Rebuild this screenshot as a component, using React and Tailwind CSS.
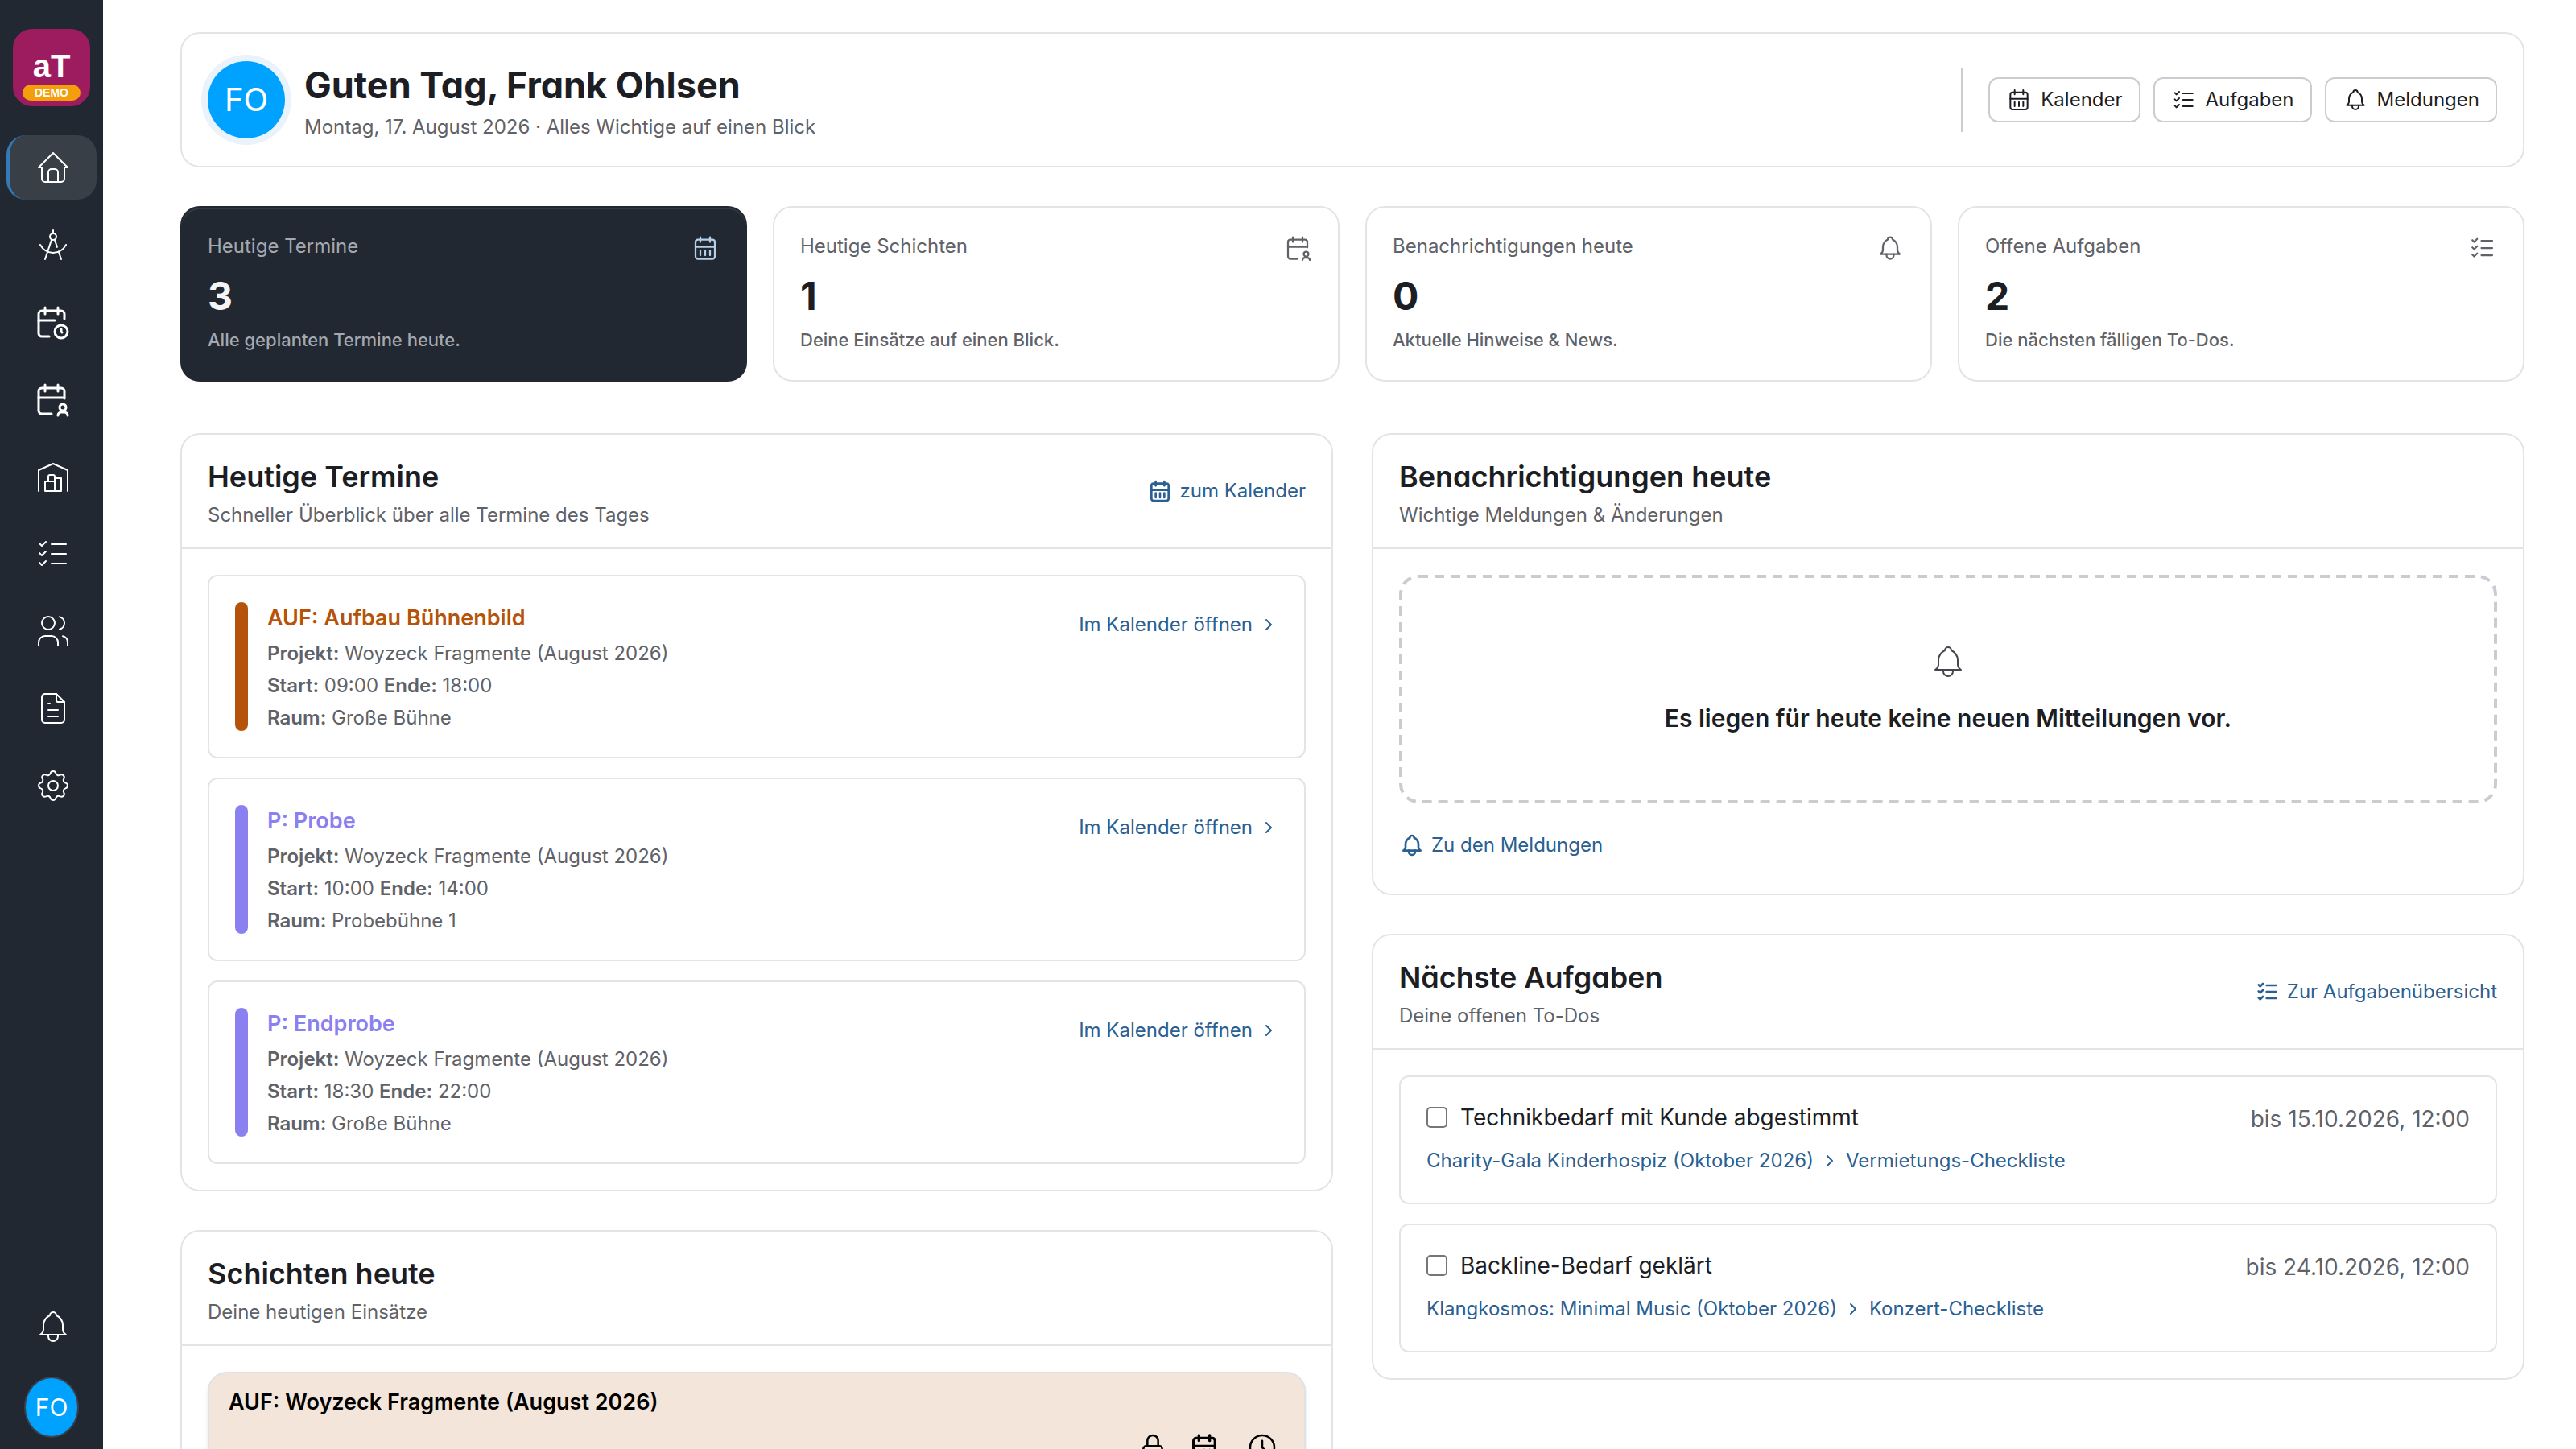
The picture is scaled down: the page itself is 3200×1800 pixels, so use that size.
import React from "react";

const ICONS = {
  home: ["M5 12l-2 0l9 -9l9 9l-2 0", "M5 12v7a2 2 0 0 0 2 2h10a2 2 0 0 0 2 -2v-7", "M9 21v-6a2 2 0 0 1 2 -2h2a2 2 0 0 1 2 2v6"],
  geometry: ["M7 21l4 -12m2 0l1.48 4.439m.949 2.847l1.571 4.714", "M10 7a2 2 0 1 0 4 0a2 2 0 1 0 -4 0", "M4 12c1.526 2.955 4.588 5 8 5c3.41 0 6.473 -2.048 8 -5", "M12 5v-2"],
  calendarClock: ["M10.5 21h-4.5a2 2 0 0 1 -2 -2v-12a2 2 0 0 1 2 -2h12a2 2 0 0 1 2 2v3", "M16 3v4", "M8 3v4", "M4 11h10", "M14 18a4 4 0 1 0 8 0a4 4 0 1 0 -8 0", "M18 16.5v1.5l.5 .5"],
  calendarUser: ["M12 21h-6a2 2 0 0 1 -2 -2v-12a2 2 0 0 1 2 -2h12a2 2 0 0 1 2 2v4.5", "M16 3v4", "M8 3v4", "M4 11h16", "M17 17a2 2 0 1 0 4 0a2 2 0 1 0 -4 0", "M22 22a2 2 0 0 0 -2 -2h-2a2 2 0 0 0 -2 2"],
  calendar: ["M4 7a2 2 0 0 1 2 -2h12a2 2 0 0 1 2 2v12a2 2 0 0 1 -2 2h-12a2 2 0 0 1 -2 -2v-12z", "M16 3v4", "M8 3v4", "M4 11h16", "M8 14v4", "M12 14v4", "M16 14v4"],
  warehouse: ["M3 21v-13l9 -4l9 4v13", "M13 13h4v8h-10v-6h6", "M13 21v-9a1 1 0 0 0 -1 -1h-2a1 1 0 0 0 -1 1v3"],
  tasks: ["M3.5 5.5l1.5 1.5l2.5 -2.5", "M3.5 11.5l1.5 1.5l2.5 -2.5", "M3.5 17.5l1.5 1.5l2.5 -2.5", "M11 6h9", "M11 12h9", "M11 18h9"],
  users: ["M5 7a4 4 0 1 0 8 0a4 4 0 1 0 -8 0", "M3 21v-2a4 4 0 0 1 4 -4h4a4 4 0 0 1 4 4v2", "M16 3.13a4 4 0 0 1 0 7.75", "M21 21v-2a4 4 0 0 0 -3 -3.85"],
  file: ["M14 3v4a1 1 0 0 0 1 1h4", "M17 21h-10a2 2 0 0 1 -2 -2v-14a2 2 0 0 1 2 -2h7l5 5v11a2 2 0 0 1 -2 2z", "M9 9h1", "M9 13h6", "M9 17h6"],
  settings: ["M10.325 4.317c.426 -1.756 2.924 -1.756 3.35 0a1.724 1.724 0 0 0 2.573 1.066c1.543 -.94 3.31 .826 2.37 2.37a1.724 1.724 0 0 0 1.065 2.572c1.756 .426 1.756 2.924 0 3.35a1.724 1.724 0 0 0 -1.066 2.573c.94 1.543 -.826 3.31 -2.37 2.37a1.724 1.724 0 0 0 -2.572 1.065c-.426 1.756 -2.924 1.756 -3.35 0a1.724 1.724 0 0 0 -2.573 -1.066c-1.543 .94 -3.31 -.826 -2.37 -2.37a1.724 1.724 0 0 0 -1.065 -2.572c-1.756 -.426 -1.756 -2.924 0 -3.35a1.724 1.724 0 0 0 1.066 -2.573c-.94 -1.543 .826 -3.31 2.37 -2.37c1 .608 2.296 .07 2.572 -1.065z", "M9 12a3 3 0 1 0 6 0a3 3 0 0 0 -6 0"],
  bell: ["M10 5a2 2 0 1 1 4 0a7 7 0 0 1 4 6v3a4 4 0 0 0 2 3h-16a4 4 0 0 0 2 -3v-3a7 7 0 0 1 4 -6", "M9 17v1a3 3 0 0 0 6 0v-1"],
  chevron: ["M9 6l6 6l-6 6"],
  lock: ["M5 13a2 2 0 0 1 2 -2h10a2 2 0 0 1 2 2v6a2 2 0 0 1 -2 2h-10a2 2 0 0 1 -2 -2v-6z", "M11 16a1 1 0 1 0 2 0a1 1 0 0 0 -2 0", "M8 11v-4a4 4 0 1 1 8 0v4"],
  clock: ["M3 12a9 9 0 1 0 18 0a9 9 0 0 0 -18 0", "M12 7v5l3 3"],
};

function Icon({ name, stroke = 2, className }) {
  return (
    <svg viewBox="0 0 24 24" fill="none" stroke="currentColor" strokeWidth={stroke} strokeLinecap="round" strokeLinejoin="round" aria-hidden="true" className={`shrink-0 ${className}`}>
      {ICONS[name].map((d) => (
        <path key={d} d={d} />
      ))}
    </svg>
  );
}

const DISPLAY = "[font-feature-settings:'cv11']";

const NAV = [
  { icon: "home", label: "Start", active: true },
  { icon: "geometry", label: "Projekte" },
  { icon: "calendarClock", label: "Kalender", flat: true },
  { icon: "calendarUser", label: "Schichten", flat: true },
  { icon: "warehouse", label: "Lager" },
  { icon: "tasks", label: "Aufgaben" },
  { icon: "users", label: "Kontakte" },
  { icon: "file", label: "Dokumente" },
  { icon: "settings", label: "Einstellungen" },
];

function NavItem({ icon, label, active, flat }) {
  const edge = flat ? "" : active ? "border-l-4 border-[#337ab7] bg-[#393f47]" : "border-l-4 border-transparent";
  return (
    <a href="#" aria-label={label} className={`flex h-20 items-center justify-center rounded-3xl text-white ${edge}`}>
      <Icon name={icon} stroke={flat ? 1.5 : 1} className="size-12" />
    </a>
  );
}

function Sidebar() {
  return (
    <aside className="flex w-32 shrink-0 flex-col bg-[#212831] px-2 pt-9 pb-4">
      <a href="#" className="mx-2 flex h-24 flex-col items-center rounded-3xl bg-[#9c1c5f] pt-6 text-white [font-family:'Liberation_Sans',Arial,sans-serif]">
        <span className="text-[40px] leading-[45px] font-bold">aT</span>
        <span className="h-5 w-[72px] rounded-full bg-[#f59e0b] text-center text-sm leading-5 font-bold">DEMO</span>
      </a>
      <nav className="mt-9 flex flex-col gap-4">
        {NAV.map((item) => (
          <NavItem key={item.label} {...item} />
        ))}
      </nav>
      <div className="mt-auto flex flex-col gap-6">
        <NavItem icon="bell" label="Meldungen" />
        <button type="button" className="mx-auto h-18 w-16 rounded-[50%] bg-[#00a2ff] text-[30px] text-white ring-2 ring-[#39424d]">FO</button>
      </div>
    </aside>
  );
}

const ACTIONS = [
  { icon: "calendar", label: "Kalender" },
  { icon: "tasks", label: "Aufgaben" },
  { icon: "bell", label: "Meldungen" },
];

function Header() {
  return (
    <header className="flex h-[168px] items-center rounded-3xl border-2 border-[#e4e4e7] px-8">
      <div className="flex size-24 shrink-0 items-center justify-center rounded-full bg-[#00a2ff] text-[40px] text-white ring-8 ring-[#eaf2fb]">FO</div>
      <div className="ml-6 flex-1 pt-2">
        <h1 className={`text-[45px] leading-[60px] font-bold text-[#1c1e24] ${DISPLAY}`}>Guten Tag, Frank Ohlsen</h1>
        <p className="text-2xl leading-[44px] text-[#606268]">Montag, 17. August 2026 · Alles Wichtige auf einen Blick</p>
      </div>
      <div className="flex h-20 items-center gap-4 border-l-2 border-[#cbccd2] pl-8">
        {ACTIONS.map((a) => (
          <button key={a.label} type="button" className="flex h-14 items-center gap-[11px] rounded-xl border-2 border-[#cbccd2] px-5 text-2xl text-[#1c1e24]">
            <Icon name={a.icon} stroke={1.5} className="size-8" />
            {a.label}
          </button>
        ))}
      </div>
    </header>
  );
}

const STATS = [
  { icon: "calendar", label: "Heutige Termine", value: "3", note: "Alle geplanten Termine heute.", dark: true },
  { icon: "calendarUser", label: "Heutige Schichten", value: "1", note: "Deine Einsätze auf einen Blick." },
  { icon: "bell", label: "Benachrichtigungen heute", value: "0", note: "Aktuelle Hinweise & News." },
  { icon: "tasks", label: "Offene Aufgaben", value: "2", note: "Die nächsten fälligen To-Dos." },
];

function Stat({ icon, label, value, note, dark }) {
  return (
    <article
      className={`flex justify-between rounded-3xl border-2 p-8 ${
        dark ? "border-[#212831] bg-[#222831] text-[#a4a8b0] shadow-[inset_0_2px_0_rgba(255,255,255,0.08)]" : "border-[#e4e4e7] text-[#606268]"
      }`}
    >
      <div>
        <h2 className="text-2xl leading-8">{label}</h2>
        <p className={`mt-[14px] text-5xl leading-[64px] font-bold ${DISPLAY} ${dark ? "text-[#f4f4f5]" : "text-[#1c1e24]"}`}>{value}</p>
        <p className="mt-1 text-[22px] leading-9 font-medium">{note}</p>
      </div>
      <Icon name={icon} stroke={1.5} className={`size-9 ${dark ? "text-[#b5d0ea]" : ""}`} />
    </article>
  );
}

function Section({ title, subtitle, link, children }) {
  return (
    <section className="rounded-3xl border-2 border-[#e4e4e7]">
      <div className="flex items-center justify-between border-b-2 border-[#e4e4e7] px-8 py-[22px]">
        <div>
          <h2 className={`text-4xl leading-[60px] font-semibold text-[#1c1e24] ${DISPLAY}`}>{title}</h2>
          <p className="text-2xl leading-9 text-[#606268]">{subtitle}</p>
        </div>
        {link}
      </div>
      <div className="flex flex-col gap-6 p-8">{children}</div>
    </section>
  );
}

function IconLink({ icon, children, className = "" }) {
  return (
    <a href="#" className={`flex items-center gap-2 text-2xl text-[#2a6092] ${className}`}>
      <Icon name={icon} className="size-8" />
      {children}
    </a>
  );
}

const EVENTS = [
  { title: "AUF: Aufbau Bühnenbild", start: "09:00", end: "18:00", room: "Große Bühne", bar: "bg-[#b45309]", text: "text-[#b45309]" },
  { title: "P: Probe", start: "10:00", end: "14:00", room: "Probebühne 1", bar: "bg-[#8b80f0]", text: "text-[#8b80f0]" },
  { title: "P: Endprobe", start: "18:30", end: "22:00", room: "Große Bühne", bar: "bg-[#8b80f0]", text: "text-[#8b80f0]" },
];

function EventCard({ title, start, end, room, bar, text }) {
  return (
    <article className="flex gap-6 rounded-xl border-2 border-[#e4e4e7] p-8">
      <span className={`w-4 shrink-0 rounded-full ${bar}`} />
      <div className="flex-1 text-2xl leading-10 text-[#606268]">
        <h3 className={`text-[27px] leading-10 font-semibold ${text}`}>{title}</h3>
        <div className="mt-1 -mb-1">
          <p><b className="font-semibold">Projekt:</b> Woyzeck Fragmente (August 2026)</p>
          <p><b className="font-semibold">Start:</b> {start} <b className="font-semibold">Ende:</b> {end}</p>
          <p><b className="font-semibold">Raum:</b> {room}</p>
        </div>
      </div>
      <a href="#" className="flex h-14 items-center gap-2 text-2xl text-[#2a6092]">
        Im Kalender öffnen
        <Icon name="chevron" className="size-6" />
      </a>
    </article>
  );
}

const TASKS = [
  { id: "task-1", title: "Technikbedarf mit Kunde abgestimmt", due: "bis 15.10.2026, 12:00", project: "Charity-Gala Kinderhospiz (Oktober 2026)", list: "Vermietungs-Checkliste" },
  { id: "task-2", title: "Backline-Bedarf geklärt", due: "bis 24.10.2026, 12:00", project: "Klangkosmos: Minimal Music (Oktober 2026)", list: "Konzert-Checkliste" },
];

function TaskCard({ id, title, due, project, list }) {
  return (
    <article className="rounded-xl border-2 border-[#e4e4e7] p-8">
      <div className="flex items-start justify-between text-[28px]">
        <div className="flex items-center gap-4">
          <input id={id} type="checkbox" className="size-[26px] appearance-none rounded-[5px] border-2 border-[#767676] bg-white checked:bg-[#2a6092]" />
          <label htmlFor={id} className="leading-9 text-[#1c1e24]">{title}</label>
        </div>
        <span className="leading-10 text-[#606268]">{due}</span>
      </div>
      <div className="mt-3 flex items-center gap-2 text-2xl leading-10 text-[#2a6092]">
        <a href="#">{project}</a>
        <Icon name="chevron" className="size-6" />
        <a href="#">{list}</a>
      </div>
    </article>
  );
}

function DashedOutline() {
  return (
    <svg aria-hidden="true" className="absolute inset-0 size-full overflow-visible p-0.5 text-[#cbccd2]">
      <rect width="100%" height="100%" rx="22" fill="none" stroke="currentColor" strokeWidth="4" strokeDasharray="12 8" />
    </svg>
  );
}

export default function App() {
  return (
    <div className="flex h-screen overflow-hidden bg-white [font-family:Inter,sans-serif]">
      <Sidebar />
      <main className="flex-1 overflow-hidden pt-10 pr-16 pl-24">
        <Header />
        <div className="mt-12 grid grid-cols-4 gap-8">
          {STATS.map((s) => (
            <Stat key={s.label} {...s} />
          ))}
        </div>
        <div className="mt-16 grid grid-cols-2 items-start gap-12">
          <div className="flex flex-col gap-12">
            <Section title="Heutige Termine" subtitle="Schneller Überblick über alle Termine des Tages" link={<IconLink icon="calendar">zum Kalender</IconLink>}>
              {EVENTS.map((e) => (
                <EventCard key={e.title} {...e} />
              ))}
            </Section>
            <Section title="Schichten heute" subtitle="Deine heutigen Einsätze">
              <article className="rounded-3xl border-2 border-[#e0e2e8] bg-[#f3e5da] pt-4 pr-8 pb-8 pl-6 shadow-md">
                <h3 className="text-[27px] leading-10 font-semibold text-black">AUF: Woyzeck Fragmente (August 2026)</h3>
                <div className="mt-4 flex justify-end text-black">
                  <Icon name="lock" stroke={1.5} className="mr-6 size-10" />
                  <Icon name="calendar" className="mr-8 size-10" />
                  <Icon name="clock" stroke={1.5} className="size-10" />
                </div>
              </article>
            </Section>
          </div>
          <div className="flex flex-col gap-12">
            <Section title="Benachrichtigungen heute" subtitle="Wichtige Meldungen & Änderungen">
              <div className="relative flex flex-col items-center gap-6 rounded-3xl py-[84px]">
                <DashedOutline />
                <Icon name="bell" stroke={1} className="size-12 text-[#44464d]" />
                <p className={`text-[30px] leading-[44px] font-semibold text-[#1c1e24] ${DISPLAY}`}>Es liegen für heute keine neuen Mitteilungen vor.</p>
              </div>
              <IconLink icon="bell" className="h-14 self-start">Zu den Meldungen</IconLink>
            </Section>
            <Section title="Nächste Aufgaben" subtitle="Deine offenen To-Dos" link={<IconLink icon="tasks">Zur Aufgabenübersicht</IconLink>}>
              {TASKS.map((t) => (
                <TaskCard key={t.id} {...t} />
              ))}
            </Section>
          </div>
        </div>
      </main>
    </div>
  );
}
